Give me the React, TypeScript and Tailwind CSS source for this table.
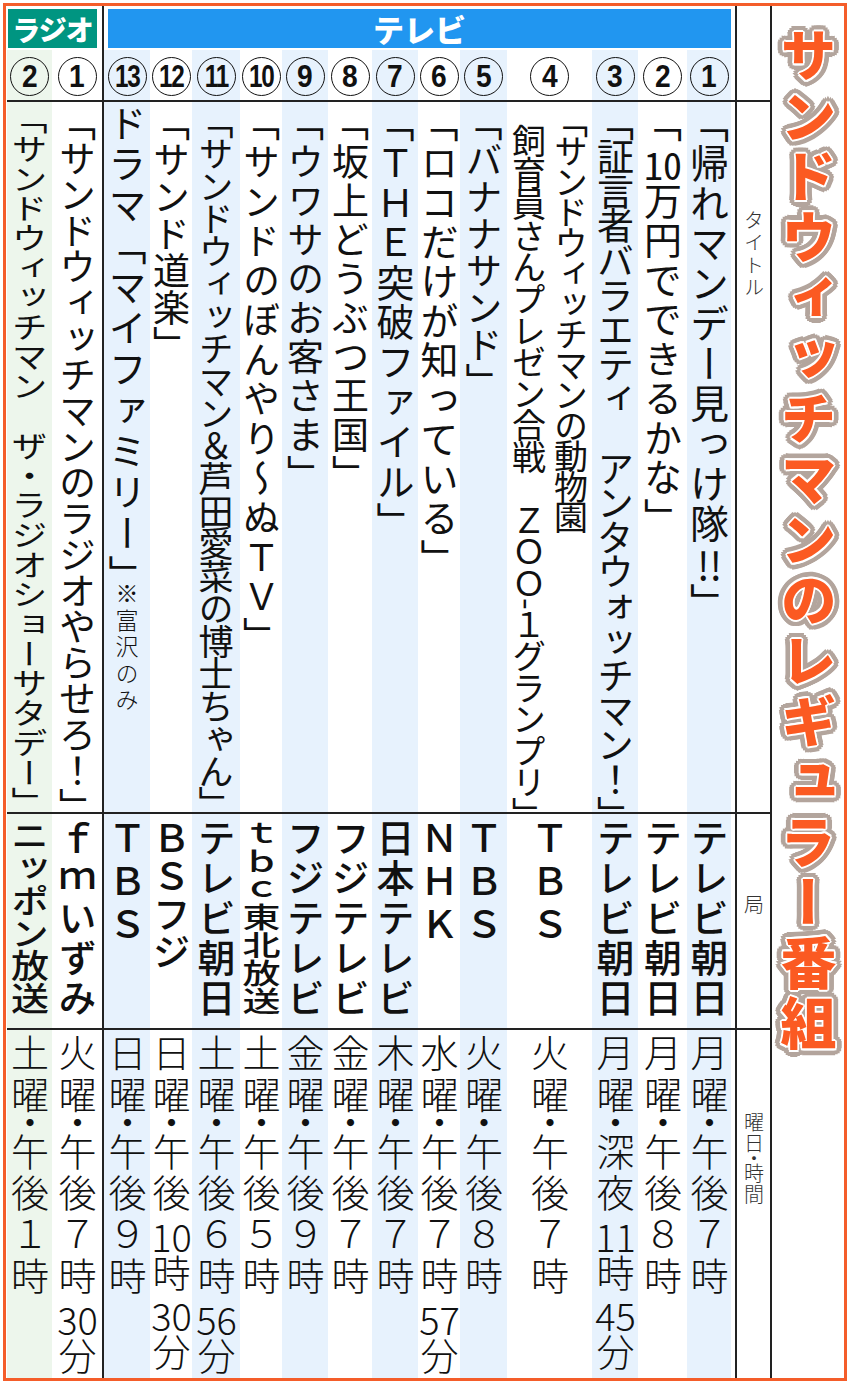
import React from "react";

const VT = "[writing-mode:vertical-rl] leading-none whitespace-nowrap";
const LINE = "border-t-2 border-[#222]";
const BLUE = "bg-[#e7f2fd]";
const WHITE = "bg-white";
const GREEN = "bg-[#edf6ec]";

const TCY = ({ children }: { children: React.ReactNode }) => (
  <span className="[text-combine-upright:all]">{children}</span>
);

function Circle({ n }: { n: number }) {
  return (
    <div className="w-[39px] h-[39px] rounded-full border-[1.5px] border-[#111] flex items-center justify-center">
      <span
        className={
          n >= 10
            ? "font-['Liberation_Sans',sans-serif] font-bold text-[32px] leading-none tracking-[-1.5px] scale-x-[0.76]"
            : "font-['Liberation_Sans',sans-serif] font-bold text-[32px] leading-none scale-x-[0.88]"
        }
      >
        {n}
      </span>
    </div>
  );
}

function Time({ d, p, h, m }: { d: string; p: string; h: React.ReactNode; m?: React.ReactNode }) {
  return (
    <div className={`${VT} text-[38px] font-light tracking-[3.5px]`}>
      {d}
      <span className="-mx-[13px]">・</span>
      {p}
      {h}時
      {m ? (
        <>
          {m}分
        </>
      ) : null}
    </div>
  );
}

type ColProps = {
  w: string;
  bg: string;
  num?: number;
  title?: React.ReactNode;
  station?: React.ReactNode;
  time?: React.ReactNode;
};

function Col({ w, bg, num, title, station, time }: ColProps) {
  return (
    <div className={`${w} ${bg} shrink-0 flex flex-col`}>
      <div className="h-[50px] flex items-center justify-center pt-[2px]">
        {num ? <Circle n={num} /> : null}
      </div>
      <div className={`h-[712px] ${LINE} flex justify-center pt-[2px]`}>{title}</div>
      <div className={`h-[216px] ${LINE} flex justify-center pt-[5px]`}>{station}</div>
      <div className={`flex-1 ${LINE} flex justify-center pt-[4px]`}>{time}</div>
    </div>
  );
}

const St = ({ cls, children }: { cls: string; children: React.ReactNode }) => (
  <div className={`${VT} text-[38px] font-medium ${cls}`}>{children}</div>
);

const TITLE = "サンドウィッチマンのレギュラー番組";

export default function App() {
  return (
    <div className="w-[850px] h-[1384px] bg-white p-[3px] font-['Noto_Sans_CJK_JP',sans-serif] text-[#111]">
      <div className="w-full h-full border-[3px] border-[#f45d2a] flex">
        {/* Radio section */}
        <div className="w-[96px] shrink-0 flex flex-col">
          <div className="h-[44px] pl-[2px] pt-[3px]">
            <div className="w-[89px] h-[39px] bg-[#009581] flex items-center justify-center text-white font-black text-[28px] tracking-[-1px] leading-none">
              ラジオ
            </div>
          </div>
          <div className="flex flex-1 pl-[1px]">
            <Col
              w="w-[45px]"
              bg={GREEN}
              num={2}
              title={
                <div className={`${VT} text-[36px] scale-y-[0.825] origin-top`}>
                  「サンドウィッチマン　ザ・ラジオショーサタデー」
                </div>
              }
              station={<St cls="scale-y-[0.86] origin-top">ニッポン放送</St>}
              time={<Time d="土曜" p="午後" h="１" />}
            />
            <Col
              w="w-[50px]"
              bg={WHITE}
              num={1}
              title={
                <div className={`${VT} text-[37px] tracking-[-1px]`}>
                  「サンドウィッチマンのラジオやらせろ！」
                </div>
              }
              station={<St cls="tracking-[2px]">ｆｍいずみ</St>}
              time={<Time d="火曜" p="午後" h="７" m={<TCY>30</TCY>} />}
            />
          </div>
        </div>

        <div className="w-[2px] shrink-0 bg-[#222]" />

        {/* TV section */}
        <div className="w-[631px] shrink-0 flex flex-col">
          <div className="h-[44px] pl-[4px] pt-[3px]">
            <div className="w-[623px] h-[39px] bg-[#2196f0] flex items-center justify-center text-white font-black text-[31px] leading-none">
              テレビ
            </div>
          </div>
          <div className="flex flex-1">
            <Col
              w="w-[46px]"
              bg={BLUE}
              num={13}
              title={
                <div className={`${VT} text-[38px] tracking-[3px]`}>
                  ドラマ「マイファミリー<span className="-me-[14px]">」</span>
                  <span className="text-[23px] tracking-[3.5px] font-light">※富沢のみ</span>
                </div>
              }
              station={<St cls="tracking-[5px]">ＴＢＳ</St>}
              time={<Time d="日曜" p="午後" h="９" />}
            />
            <Col
              w="w-[42px]"
              bg={WHITE}
              num={12}
              title={<div className={`${VT} text-[37px] tracking-[0px]`}>「サンド道楽」</div>}
              station={<St cls="tracking-[0px]">ＢＳフジ</St>}
              time={<Time d="日曜" p="午後" h={<TCY>10</TCY>} m={<TCY>30</TCY>} />}
            />
            <Col
              w="w-[48px]"
              bg={BLUE}
              num={11}
              title={
                <div className={`${VT} text-[35px] tracking-[-2.5px]`}>
                  「サンドウィッチマン＆芦田愛菜の博士ちゃん」
                </div>
              }
              station={<St cls="tracking-[2px]">テレビ朝日</St>}
              time={<Time d="土曜" p="午後" h="６" m={<TCY>56</TCY>} />}
            />
            <Col
              w="w-[42px]"
              bg={WHITE}
              num={10}
              title={
                <div className={`${VT} text-[37px] tracking-[2.5px]`}>「サンドのぼんやり～ぬＴＶ」</div>
              }
              station={<St cls="scale-y-[0.74] origin-top">ｔｂｃ東北放送</St>}
              time={<Time d="土曜" p="午後" h="５" />}
            />
            <Col
              w="w-[46px]"
              bg={BLUE}
              num={9}
              title={<div className={`${VT} text-[37px] tracking-[2px]`}>「ウワサのお客さま」</div>}
              station={<St cls="tracking-[2px]">フジテレビ</St>}
              time={<Time d="金曜" p="午後" h="９" />}
            />
            <Col
              w="w-[44px]"
              bg={WHITE}
              num={8}
              title={<div className={`${VT} text-[37px] tracking-[2px]`}>「坂上どうぶつ王国」</div>}
              station={<St cls="tracking-[2px]">フジテレビ</St>}
              time={<Time d="金曜" p="午後" h="７" />}
            />
            <Col
              w="w-[46px]"
              bg={BLUE}
              num={7}
              title={<div className={`${VT} text-[38px] tracking-[1.8px]`}>「ＴＨＥ突破ファイル」</div>}
              station={<St cls="tracking-[2px]">日本テレビ</St>}
              time={<Time d="木曜" p="午後" h="７" />}
            />
            <Col
              w="w-[42px]"
              bg={WHITE}
              num={6}
              title={<div className={`${VT} text-[38px] tracking-[1.5px]`}>「ロコだけが知っている」</div>}
              station={<St cls="tracking-[5px]">ＮＨＫ</St>}
              time={<Time d="水曜" p="午後" h="７" m={<TCY>57</TCY>} />}
            />
            <Col
              w="w-[47px]"
              bg={BLUE}
              num={5}
              title={<div className={`${VT} text-[37px] tracking-[0px]`}>「バナナサンド」</div>}
              station={<St cls="tracking-[5px]">ＴＢＳ</St>}
              time={<Time d="火曜" p="午後" h="８" />}
            />
            <Col
              w="w-[85px]"
              bg={WHITE}
              num={4}
              title={
                <div className={`${VT} text-[34px]`}>
                  <div className="leading-[42px] tracking-[-3.5px]">「サンドウィッチマンの動物園</div>
                  <div className="leading-[42px] tracking-[-2.4px] pt-[20px]">
                    飼育員さんプレゼン合戦　ＺＯＯ-１グランプリ」
                  </div>
                </div>
              }
              station={<St cls="tracking-[5px]">ＴＢＳ</St>}
              time={<Time d="火曜" p="午後" h="７" />}
            />
            <Col
              w="w-[46px]"
              bg={BLUE}
              num={3}
              title={
                <div className={`${VT} text-[37px] tracking-[-2.4px]`}>
                  「証言者バラエティ　アンタウォッチマン！」
                </div>
              }
              station={<St cls="tracking-[2px]">テレビ朝日</St>}
              time={<Time d="月曜" p="深夜" h={<TCY>11</TCY>} m={<TCY>45</TCY>} />}
            />
            <Col
              w="w-[49px]"
              bg={WHITE}
              num={2}
              title={
                <div className={`${VT} text-[38px] tracking-[1.5px]`}>
                  「<TCY>10</TCY>万円でできるかな」
                </div>
              }
              station={<St cls="tracking-[2px]">テレビ朝日</St>}
              time={<Time d="月曜" p="午後" h="８" />}
            />
            <Col
              w="w-[44px]"
              bg={BLUE}
              num={1}
              title={
                <div className={`${VT} text-[39px] tracking-[1px]`}>
                  「帰れマンデー見っけ隊<TCY>!!</TCY>」
                </div>
              }
              station={<St cls="tracking-[2px]">テレビ朝日</St>}
              time={<Time d="月曜" p="午後" h="７" />}
            />
            <Col w="w-[4px]" bg={WHITE} />
          </div>
        </div>

        <div className="w-[2px] shrink-0 bg-[#222]" />

        {/* Label column */}
        <div className="w-[33px] shrink-0 flex flex-col text-[#333]">
          <div className="h-[94px]" />
          <div className={`h-[712px] ${LINE} flex justify-center pt-[108px]`}>
            <div className={`${VT} text-[20px] font-light tracking-[2.5px]`}>タイトル</div>
          </div>
          <div className={`h-[216px] ${LINE} flex justify-center pt-[80px]`}>
            <div className={`${VT} text-[20px] font-light`}>局</div>
          </div>
          <div className={`flex-1 ${LINE} flex justify-center pt-[82px]`}>
            <div className={`${VT} text-[20px] font-light tracking-[1px]`}>
              曜日<span className="-mx-[6px]">・</span>時間
            </div>
          </div>
        </div>

        <div className="w-[2px] shrink-0 bg-[#222]" />

        {/* Big title */}
        <div className="w-[72px] shrink-0 flex justify-center pt-[21px]">
          <div className={`${VT} grid text-[56px] font-black tracking-[4.5px] text-[#fb5a22]`}>
            <span className="col-start-1 row-start-1 [text-shadow:6.5px_0_0.6px_#b3a59d,6px_2.5px_0.6px_#b3a59d,4.6px_4.6px_0.6px_#b3a59d,2.5px_6px_0.6px_#b3a59d,0_6.5px_0.6px_#b3a59d,-2.5px_6px_0.6px_#b3a59d,-4.6px_4.6px_0.6px_#b3a59d,-6px_2.5px_0.6px_#b3a59d,-6.5px_0_0.6px_#b3a59d,-6px_-2.5px_0.6px_#b3a59d,-4.6px_-4.6px_0.6px_#b3a59d,-2.5px_-6px_0.6px_#b3a59d,0_-6.5px_0.6px_#b3a59d,2.5px_-6px_0.6px_#b3a59d,4.6px_-4.6px_0.6px_#b3a59d,6px_-2.5px_0.6px_#b3a59d,4.2px_0_0_#b3a59d,3px_3px_0_#b3a59d,0_4.2px_0_#b3a59d,-3px_3px_0_#b3a59d,-4.2px_0_0_#b3a59d,-3px_-3px_0_#b3a59d,0_-4.2px_0_#b3a59d,3px_-3px_0_#b3a59d]">
              {TITLE}
            </span>
            <span className="col-start-1 row-start-1 [text-shadow:1.8px_0_0_#fff,1.3px_1.3px_0_#fff,0_1.8px_0_#fff,-1.3px_1.3px_0_#fff,-1.8px_0_0_#fff,-1.3px_-1.3px_0_#fff,0_-1.8px_0_#fff,1.3px_-1.3px_0_#fff]">
              {TITLE}
            </span>
          </div>
        </div>
      </div>
    </div>
  );
}
